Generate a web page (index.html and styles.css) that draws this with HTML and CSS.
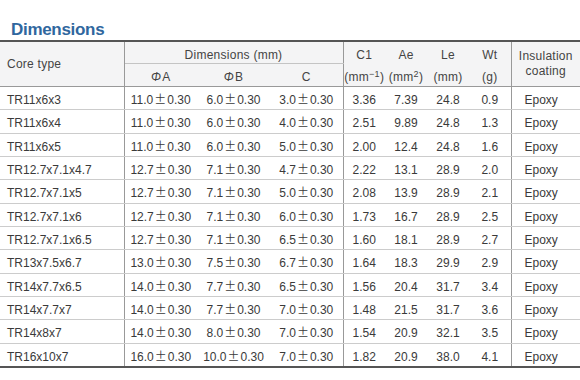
FILE: index.html
```html
<!DOCTYPE html>
<html lang="en">
<head>
<meta charset="utf-8">
<title>Dimensions</title>
<link rel="stylesheet" href="styles.css">
</head>
<body>
<h2 class="title">Dimensions</h2>
<table class="spec">
  <colgroup>
    <col class="c-type"><col class="c-dim"><col class="c-dim"><col class="c-dim">
    <col class="c-num"><col class="c-num"><col class="c-num"><col class="c-num">
    <col class="c-ins">
  </colgroup>
  <thead>
    <tr class="h1">
      <th rowspan="2" class="type">Core type</th>
      <th colspan="3" class="group">Dimensions (mm)</th>
      <th>C1</th><th>Ae</th><th>Le</th><th>Wt</th>
      <th rowspan="2" class="ins">Insulation<br>coating</th>
    </tr>
    <tr class="h2">
      <th><i class="phi">Φ</i>A</th><th><i class="phi">Φ</i>B</th><th>C</th>
      <th>(mm<sup>−1</sup>)</th><th>(mm<sup>2</sup>)</th><th>(mm)</th><th>(g)</th>
    </tr>
  </thead>
  <tbody>
    <tr><td class="type">TR11x6x3</td><td>11.0<span class="pm">±</span>0.30</td><td>6.0<span class="pm">±</span>0.30</td><td class="last">3.0<span class="pm">±</span>0.30</td><td>3.36</td><td>7.39</td><td>24.8</td><td class="last">0.9</td><td class="ins">Epoxy</td></tr>
    <tr><td class="type">TR11x6x4</td><td>11.0<span class="pm">±</span>0.30</td><td>6.0<span class="pm">±</span>0.30</td><td class="last">4.0<span class="pm">±</span>0.30</td><td>2.51</td><td>9.89</td><td>24.8</td><td class="last">1.3</td><td class="ins">Epoxy</td></tr>
    <tr><td class="type">TR11x6x5</td><td>11.0<span class="pm">±</span>0.30</td><td>6.0<span class="pm">±</span>0.30</td><td class="last">5.0<span class="pm">±</span>0.30</td><td>2.00</td><td>12.4</td><td>24.8</td><td class="last">1.6</td><td class="ins">Epoxy</td></tr>
    <tr><td class="type">TR12.7x7.1x4.7</td><td>12.7<span class="pm">±</span>0.30</td><td>7.1<span class="pm">±</span>0.30</td><td class="last">4.7<span class="pm">±</span>0.30</td><td>2.22</td><td>13.1</td><td>28.9</td><td class="last">2.0</td><td class="ins">Epoxy</td></tr>
    <tr><td class="type">TR12.7x7.1x5</td><td>12.7<span class="pm">±</span>0.30</td><td>7.1<span class="pm">±</span>0.30</td><td class="last">5.0<span class="pm">±</span>0.30</td><td>2.08</td><td>13.9</td><td>28.9</td><td class="last">2.1</td><td class="ins">Epoxy</td></tr>
    <tr><td class="type">TR12.7x7.1x6</td><td>12.7<span class="pm">±</span>0.30</td><td>7.1<span class="pm">±</span>0.30</td><td class="last">6.0<span class="pm">±</span>0.30</td><td>1.73</td><td>16.7</td><td>28.9</td><td class="last">2.5</td><td class="ins">Epoxy</td></tr>
    <tr><td class="type">TR12.7x7.1x6.5</td><td>12.7<span class="pm">±</span>0.30</td><td>7.1<span class="pm">±</span>0.30</td><td class="last">6.5<span class="pm">±</span>0.30</td><td>1.60</td><td>18.1</td><td>28.9</td><td class="last">2.7</td><td class="ins">Epoxy</td></tr>
    <tr><td class="type">TR13x7.5x6.7</td><td>13.0<span class="pm">±</span>0.30</td><td>7.5<span class="pm">±</span>0.30</td><td class="last">6.7<span class="pm">±</span>0.30</td><td>1.64</td><td>18.3</td><td>29.9</td><td class="last">2.9</td><td class="ins">Epoxy</td></tr>
    <tr><td class="type">TR14x7.7x6.5</td><td>14.0<span class="pm">±</span>0.30</td><td>7.7<span class="pm">±</span>0.30</td><td class="last">6.5<span class="pm">±</span>0.30</td><td>1.56</td><td>20.4</td><td>31.7</td><td class="last">3.4</td><td class="ins">Epoxy</td></tr>
    <tr><td class="type">TR14x7.7x7</td><td>14.0<span class="pm">±</span>0.30</td><td>7.7<span class="pm">±</span>0.30</td><td class="last">7.0<span class="pm">±</span>0.30</td><td>1.48</td><td>21.5</td><td>31.7</td><td class="last">3.6</td><td class="ins">Epoxy</td></tr>
    <tr><td class="type">TR14x8x7</td><td>14.0<span class="pm">±</span>0.30</td><td>8.0<span class="pm">±</span>0.30</td><td class="last">7.0<span class="pm">±</span>0.30</td><td>1.54</td><td>20.9</td><td>32.1</td><td class="last">3.5</td><td class="ins">Epoxy</td></tr>
    <tr><td class="type">TR16x10x7</td><td>16.0<span class="pm">±</span>0.30</td><td>10.0<span class="pm">±</span>0.30</td><td class="last">7.0<span class="pm">±</span>0.30</td><td>1.82</td><td>20.9</td><td>38.0</td><td class="last">4.1</td><td class="ins">Epoxy</td></tr>
  </tbody>
</table>
</body>
</html>
```

FILE: styles.css
```css
html, body {
  margin: 0;
  padding: 0;
  background: #ffffff;
  overflow: hidden;
}

body {
  padding-top: 19px;
  font-family: "Liberation Sans", Arial, sans-serif;
  color: #3a3a3a;
}

.title {
  margin: 0;
  padding-left: 11px;
  font-size: 17px;
  line-height: 21px;
  font-weight: bold;
  letter-spacing: -0.3px;
  color: #2f679e;
}

.spec {
  width: 580px;
  table-layout: fixed;
  border-collapse: collapse;
  border-top: 2px solid #555555;
  border-bottom: 2px solid #555555;
  font-size: 12px;
}

.c-type { width: 124px; }
.c-dim { width: 73px; }
.c-num { width: 42px; }
.c-ins { width: 69px; }

.spec th {
  background: #f4f4f5;
  font-weight: normal;
  color: #444444;
  letter-spacing: 0.25px;
  text-align: center;
  padding: 4px 0 0;
  line-height: 14px;
  vertical-align: middle;
  white-space: nowrap;
}

.spec .h1 th { height: 17px; }
.spec .h2 th { height: 18px; border-bottom: 1px solid #999999; }

.spec th.group { border-bottom: 1px solid #c4c4c4; }

.spec th.type {
  text-align: left;
  padding: 0 0 0 7px;
  border-right: 1px solid #999999;
  border-bottom: 1px solid #999999;
}

.spec th.ins {
  padding: 0;
  line-height: 15px;
  border-left: 1px solid #999999;
  border-bottom: 1px solid #999999;
}

.spec .h1 th:nth-child(2) { border-right: 1px solid #999999; }
.spec .h2 th:nth-child(3) { border-right: 1px solid #999999; }

.phi {
  font-style: italic;
  margin-right: 1px;
}

.spec sup {
  font-size: 9px;
  line-height: 0;
  vertical-align: 4px;
}

.spec td {
  height: 18.33px;
  padding: 4px 0 0;
  line-height: 14px;
  text-align: center;
  vertical-align: middle;
  border-bottom: 1px solid #cccccc;
  white-space: nowrap;
}

.spec tbody tr:last-child td { border-bottom: 2px solid #555555; }

.spec td.type {
  text-align: left;
  padding-left: 7px;
  border-right: 1px solid #999999;
}

.spec td.last { border-right: 1px solid #999999; }

.spec td.ins {
  text-align: left;
  padding-left: 13px;
}

.pm {
  display: inline-block;
  width: 14px;
  text-align: center;
  font-family: "Noto Sans CJK KR", "Liberation Sans", sans-serif;
  line-height: 12px;
}
```
